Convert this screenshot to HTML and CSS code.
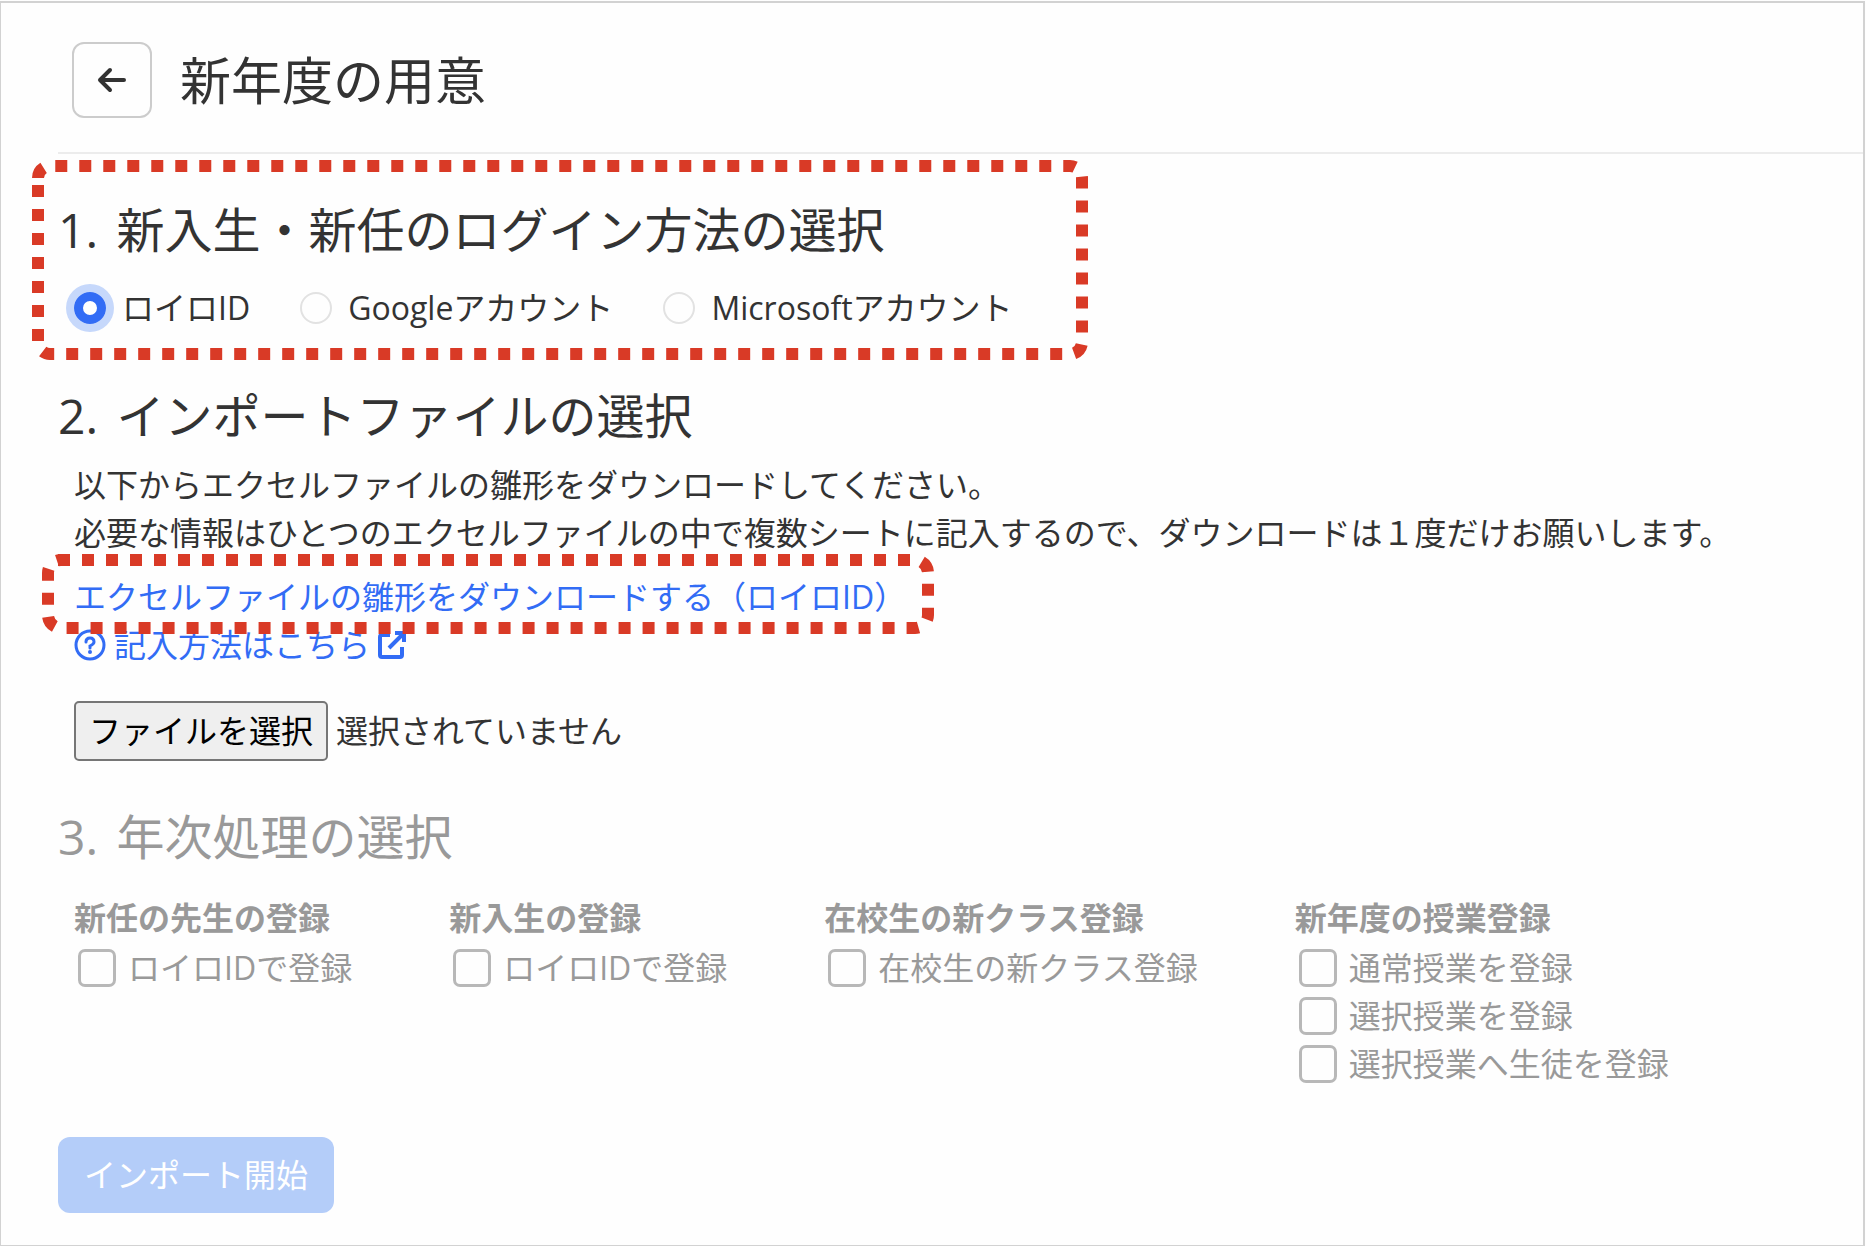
FILE: index.html
```html
<!DOCTYPE html>
<html lang="ja">
<head>
  <meta charset="UTF-8" />
  <meta name="viewport" content="width=device-width, initial-scale=1.0"/>
  <title>新年度の用意</title>
  <link rel="stylesheet" href="styles.css">
</head>
<body>

  <div class="page">
    <header class="header">
      <button type="button" class="back" aria-label="戻る">
        <svg width="32" height="32" viewBox="0 0 32 32" aria-hidden="true">
          <path d="M28 16H4M14 6L4 16l10 10" fill="none" stroke="#333" stroke-width="4" stroke-linecap="round" stroke-linejoin="round"/>
        </svg>
      </button>
      <h1>新年度の用意</h1>
    </header>

    <form class="content">
      <section class="login">
        <h2><span class="number">1.</span> 新入生・新任のログイン方法の選択</h2>
        <div class="radios">
          <label><input type="radio" name="login" value="loilo" checked />ロイロID</label>
          <label><input type="radio" name="login" value="google" />Googleアカウント</label>
          <label><input type="radio" name="login" value="microsoft" />Microsoftアカウント</label>
        </div>
        <svg class="mark mark-login" width="1056" height="200" viewBox="0 0 1056 200" aria-hidden="true">
          <path d="M6 18a12 12 0 0 1 12-12h1020a12 12 0 0 1 12 12v164a12 12 0 0 1-12 12H18a12 12 0 0 1-12-12z"/>
        </svg>
      </section>

      <section class="import">
        <h2><span class="number">2.</span> インポートファイルの選択</h2>
        <div class="inner">
          <p>以下からエクセルファイルの雛形をダウンロードしてください。<br/>必要な情報はひとつのエクセルファイルの中で複数シートに記入するので、ダウンロードは１度だけお願いします。</p>
          <div class="download">
            <a href="#">エクセルファイルの雛形をダウンロードする（ロイロID）</a>
            <svg class="mark mark-download" width="892" height="80" viewBox="0 0 892 80" aria-hidden="true">
              <path d="M16 6h857a13 13 0 0 1 13 13v42a13 13 0 0 1-13 13H19a13 13 0 0 1-13-13V19a13 13 0 0 1 13-13"/>
            </svg>
          </div>
          <a class="help" href="#">
            <svg width="32" height="32" viewBox="0 0 32 32" fill="none" stroke="#326cf5" stroke-width="3" aria-hidden="true">
              <circle cx="16" cy="16" r="14"/>
              <path d="M12 13q0-4 4-4t4 4q0 2-4 4v2" stroke-linecap="round"/>
              <circle cx="16" cy="23" r="2" fill="#326cf5" stroke="none"/>
            </svg>
            <span>記入方法はこちら</span>
            <svg width="28" height="28" viewBox="0 0 28 28" fill="none" stroke="#326cf5" stroke-width="4" aria-hidden="true">
              <path d="M12 4H4q-2 0-2 2v18q0 2 2 2h18q2 0 2-2v-8M17 2h9v9M25 3L11 17"/>
            </svg>
          </a>
          <div class="file">
            <input type="file" id="file" aria-label="インポートファイル" hidden />
            <button type="button" onclick="document.getElementById('file').click()">ファイルを選択</button>
            <span>選択されていません</span>
          </div>
        </div>
      </section>

      <section class="yearly">
        <h2><span class="number">3.</span> 年次処理の選択</h2>
        <div class="columns">
          <div>
            <h3>新任の先生の登録</h3>
            <label><input type="checkbox" disabled />ロイロIDで登録</label>
          </div>
          <div>
            <h3>新入生の登録</h3>
            <label><input type="checkbox" disabled />ロイロIDで登録</label>
          </div>
          <div>
            <h3>在校生の新クラス登録</h3>
            <label><input type="checkbox" disabled />在校生の新クラス登録</label>
          </div>
          <div>
            <h3>新年度の授業登録</h3>
            <label><input type="checkbox" disabled />通常授業を登録</label>
            <label><input type="checkbox" disabled />選択授業を登録</label>
            <label><input type="checkbox" disabled />選択授業へ生徒を登録</label>
          </div>
        </div>
      </section>

      <button type="submit" class="submit" disabled>インポート開始</button>
    </form>
  </div>

</body>
</html>
```
FILE: styles.css
```css
* {
  box-sizing: border-box;
}

body {
  margin: 0;
  background-color: #fefefe;
  color: #333;
  font-family: 'Open Sans', 'Noto Sans CJK JP', sans-serif;
  font-size: 32px;
  line-height: 48px;
}

h1, h2, h3, p {
  margin: 0;
}

h1, h2 {
  font-weight: 400;
  line-height: 64px;
}

h1 {
  font-size: 51px;
}

h2 {
  font-size: 48px;
}

h3 {
  font-size: 32px;
  font-weight: 700;
  margin-bottom: 2px;
}

a {
  color: #326cf5;
  text-decoration: none;
}

button {
  font: inherit;
  cursor: pointer;
}

.page {
  min-height: calc(100vh - 1px);
  margin: 1px 1px 0 0;
  border: 2px solid #d2d2d2;
  border-left-width: 1px;
  border-bottom-width: 1px;
}

.header {
  display: flex;
  align-items: center;
  gap: 28px;
  margin-left: 57px;
  padding: 39px 14px 34px;
  border-bottom: 2px solid #ececec;
}

.back {
  display: flex;
  align-items: center;
  justify-content: center;
  width: 80px;
  height: 76px;
  background: none;
  border: 2px solid #ccc;
  border-radius: 12px;
}

.content {
  padding: 0 57px 32px;
}

.number {
  margin-right: 6px;
}

/* dashed red frames over the steps to look at */
.mark {
  position: absolute;
  fill: none;
  stroke: #d93a26;
  stroke-width: 12;
  stroke-dasharray: 12;
  pointer-events: none;
}

.login {
  position: relative;
  padding-top: 44px;
}

.mark-login {
  top: 6px;
  left: -26px;
}

.radios {
  display: flex;
  gap: 50px;
  margin-top: 22px;
  padding-left: 16px;
}

.radios label {
  display: flex;
  align-items: center;
  gap: 16px;
}

input[type="radio"] {
  appearance: none;
  width: 32px;
  height: 32px;
  margin: 0;
  border: 2px solid #e2e2e2;
  border-radius: 50%;
}

input[type="radio"]:checked {
  border: 9px solid #326cf5;
  box-shadow: 0 0 0 8px #c6d8fb;
}

.import {
  margin-top: 52px;
}

.inner {
  padding: 13px 0 0 16px;
}

.download {
  position: relative;
  margin-top: 16px;
}

.mark-download {
  top: -19px;
  left: -32px;
}

.help {
  display: flex;
  align-items: center;
  gap: 8px;
}

.file {
  display: flex;
  align-items: center;
  gap: 8px;
  margin-top: 32px;
}

.file button {
  height: 60px;
  padding: 0 13px;
  background-color: #efefef;
  border: 2px solid #767676;
  border-radius: 5px;
  color: #000;
}

.yearly {
  margin-top: 44px;
  color: #999;
}

.columns {
  display: flex;
  gap: 97px;
  padding: 25px 0 0 16px;
}

.columns label {
  display: flex;
  align-items: center;
  gap: 12px;
  padding-left: 4px;
}

input[type="checkbox"] {
  appearance: none;
  width: 38px;
  height: 38px;
  margin: 0;
  border: 3px solid #b8b8b8;
  border-radius: 7px;
}

.submit {
  height: 76px;
  margin-top: 49px;
  padding: 0 26px;
  background-color: #b4cdf9;
  border: none;
  border-radius: 12px;
  color: #fff;
}
```
